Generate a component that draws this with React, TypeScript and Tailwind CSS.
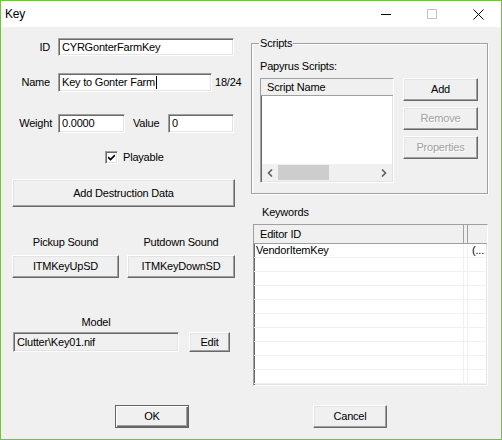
import type { ReactNode } from "react";

const FONT = "font-['Liberation_Sans',Arial,sans-serif] text-[11px] tracking-[-0.2px] text-black";

const SUNKEN =
  "border border-t-[#a0a0a0] border-l-[#a0a0a0] border-r-white border-b-white shadow-[inset_1px_1px_0_#696969,inset_-1px_-1px_0_#e3e3e3]";

const RAISED =
  "border border-t-white border-l-white border-r-[#696969] border-b-[#696969] bg-[#f0f0f0] shadow-[inset_-1px_-1px_0_#a0a0a0,inset_1px_1px_0_#e3e3e3]";

const DEFAULT_BTN =
  "border border-[#646464] bg-[#f0f0f0] shadow-[inset_1px_1px_0_white,inset_-1px_-1px_0_#696969,inset_-2px_-2px_0_#a0a0a0]";

function Field({ value, className = "", caret = false }: { value: string; className?: string; caret?: boolean }) {
  return (
    <div className={`${SUNKEN} flex shrink-0 items-center bg-white pl-[3px] leading-none ${className}`}>
      <span>{value}</span>
      {caret && <span className="ml-[1px] inline-block h-[13px] w-[1px] bg-black" />}
    </div>
  );
}

function Button({
  children,
  className = "",
  disabled = false,
  primary = false,
}: {
  children: ReactNode;
  className?: string;
  disabled?: boolean;
  primary?: boolean;
}) {
  return (
    <div
      className={`${primary ? DEFAULT_BTN : RAISED} flex shrink-0 items-center justify-center leading-none ${
        disabled ? "text-[#a0a0a0] [text-shadow:1px_1px_0_white]" : ""
      } ${className}`}
    >
      {children}
    </div>
  );
}

function TitleBar() {
  return (
    <div className="flex h-[26px] items-center bg-white">
      <span className="ml-[4px] flex-1 font-['Liberation_Sans',Arial,sans-serif] text-[12px]">Key</span>
      <div className="flex h-full w-[46px] items-center justify-center">
        <div className="h-[1px] w-[10px] bg-black" />
      </div>
      <div className="flex h-full w-[46px] items-center justify-center">
        <div className="h-[10px] w-[10px] border border-[#c4c4c4]" />
      </div>
      <div className="flex h-full w-[46px] items-center justify-center">
        <svg width="11" height="11" viewBox="0 0 11 11">
          <path d="M0.5 0.5 L10.5 10.5 M10.5 0.5 L0.5 10.5" stroke="#000" strokeWidth="1" />
        </svg>
      </div>
    </div>
  );
}

function LeftColumn() {
  return (
    <div className="ml-[11px] flex w-[223px] shrink-0 flex-col">
      <div className="mt-[11px] flex h-[18px] items-center gap-[8px]">
        <span className="w-[38px] text-right">ID</span>
        <Field value="CYRGonterFarmKey" className="h-[18px] w-[176px]" />
      </div>

      <div className="mt-[17px] flex h-[19px] items-center">
        <span className="w-[38px] shrink-0 text-right">Name</span>
        <Field value="Key to Gonter Farm" caret className="ml-[8px] h-[19px] w-[154px]" />
        <span className="ml-[3px] shrink-0">18/24</span>
      </div>

      <div className="mt-[22px] flex h-[19px] items-center">
        <span className="w-[40px] shrink-0 text-right">Weight</span>
        <Field value="0.0000" className="ml-[6px] h-[19px] w-[67px]" />
        <span className="ml-[8px] w-[30px] shrink-0">Value</span>
        <Field value="0" className="ml-[5px] h-[19px] w-[66px]" />
      </div>

      <div className="mt-[18px] flex h-[13px] items-center">
        <div className={`${SUNKEN} ml-[93px] flex h-[13px] w-[13px] items-center justify-center bg-white`}>
          <svg width="7" height="7" viewBox="0 0 7 7">
            <path d="M0 3 L2.5 5.5 L7 1" fill="none" stroke="#000" strokeWidth="1.6" />
          </svg>
        </div>
        <span className="ml-[5px]">Playable</span>
      </div>

      <Button className="mt-[15px] h-[28px] w-[223px]">Add Destruction Data</Button>

      <div className="mt-[29px] flex gap-[8px]">
        <div className="flex w-[107px] flex-col items-center">
          <span className="h-[13px] leading-[13px]">Pickup Sound</span>
          <Button className="mt-[6px] h-[23px] w-[107px]">ITMKeyUpSD</Button>
        </div>
        <div className="flex w-[108px] flex-col items-center">
          <span className="h-[13px] leading-[13px]">Putdown Sound</span>
          <Button className="mt-[6px] h-[23px] w-[108px]">ITMKeyDownSD</Button>
        </div>
      </div>

      <div className="mt-[38px] flex w-[168px] justify-center">
        <span className="h-[13px] leading-[13px]">Model</span>
      </div>
      <div className="mt-[3px] flex h-[20px] items-center">
        <div
          className={`${SUNKEN} ml-[1px] flex h-[20px] w-[166px] items-center bg-[#f0f0f0] pl-[3px] leading-none`}
        >
          Clutter\Key01.nif
        </div>
        <Button className="ml-[10px] h-[20px] w-[41px]">Edit</Button>
      </div>
    </div>
  );
}

function ScriptsGroup() {
  return (
    <fieldset className="mt-[10px] h-[157px] border border-[#a0a0a0] pl-[8px] shadow-[1px_1px_0_white,inset_1px_1px_0_white]">
      <legend className="ml-[-1px] px-[1px] leading-[13px]">Scripts</legend>
      <div className="mt-[10px] h-[13px] leading-[13px]">Papyrus Scripts:</div>
      <div className="mt-[5px] flex">
        <div className={`${SUNKEN} flex h-[105px] w-[134px] flex-col bg-white`}>
          <div className="flex h-[17px] items-center border-b border-[#a0a0a0] bg-[#f0f0f0] pl-[6px] leading-none">
            Script Name
          </div>
          <div className="flex-1" />
          <div className="mx-[1px] mb-[1px] flex h-[17px] items-center bg-[#f0f0f0]">
            <span className="flex w-[16px] justify-center">
              <svg width="6" height="8" viewBox="0 0 6 8">
                <path d="M5 0.5 L1.5 4 L5 7.5" fill="none" stroke="#606060" strokeWidth="1.6" />
              </svg>
            </span>
            <div className="h-[15px] w-[51px] bg-[#cdcdcd]" />
            <div className="flex-1" />
            <span className="flex w-[16px] justify-center">
              <svg width="6" height="8" viewBox="0 0 6 8">
                <path d="M1 0.5 L4.5 4 L1 7.5" fill="none" stroke="#606060" strokeWidth="1.6" />
              </svg>
            </span>
          </div>
        </div>
        <div className="ml-[9px] flex flex-col gap-[6px]">
          <Button className="h-[23px] w-[75px]">Add</Button>
          <Button disabled className="h-[23px] w-[75px]">
            Remove
          </Button>
          <Button disabled className="h-[23px] w-[75px]">
            Properties
          </Button>
        </div>
      </div>
    </fieldset>
  );
}

function KeywordsList() {
  const rows = Array.from({ length: 10 });
  return (
    <div className="ml-[2px] flex flex-col">
      <div className="ml-[9px] mt-[12px] h-[13px] leading-[13px]">Keywords</div>
      <div className={`${SUNKEN} mt-[5px] flex h-[162px] w-[235px] flex-col overflow-hidden bg-white`}>
        <div className="flex h-[19px] shrink-0 border-b border-[#a0a0a0] bg-[#f0f0f0]">
          <div className="flex w-[210px] items-center border-r border-[#a0a0a0] pl-[6px] leading-none">Editor ID</div>
          <div className="ml-[2px] w-[2px] border-r border-[#a0a0a0]" />
          <div className="flex-1" />
        </div>
        <div className="flex h-[14px] shrink-0 border-b border-[#f0f0f0]">
          <div className="flex w-[210px] items-center border-r border-[#f0f0f0] pl-[2px] leading-none">
            VendorItemKey
          </div>
          <div className="ml-[2px] w-[2px] border-r border-[#f0f0f0]" />
          <div className="flex items-center pl-[4px] leading-none">(...</div>
        </div>
        {rows.map((_, i) => (
          <div key={i} className="flex h-[14px] shrink-0 border-b border-[#f0f0f0]">
            <div className="w-[210px] border-r border-[#f0f0f0]" />
            <div className="ml-[2px] w-[2px] border-r border-[#f0f0f0]" />
          </div>
        ))}
      </div>
    </div>
  );
}

export default function App() {
  return (
    <div className={`${FONT} flex h-[440px] w-[502px] flex-col border border-[#75c043]`}>
      <TitleBar />
      <div className="flex flex-1 flex-col bg-[#f0f0f0]">
        <div className="flex">
          <LeftColumn />
          <div className="ml-[16px] flex w-[237px] flex-col">
            <ScriptsGroup />
            <KeywordsList />
          </div>
        </div>
        <div className="mt-[19px] flex">
          <Button primary className="ml-[114px] h-[23px] w-[74px]">
            OK
          </Button>
          <Button className="ml-[124px] h-[23px] w-[74px]">Cancel</Button>
        </div>
      </div>
    </div>
  );
}
